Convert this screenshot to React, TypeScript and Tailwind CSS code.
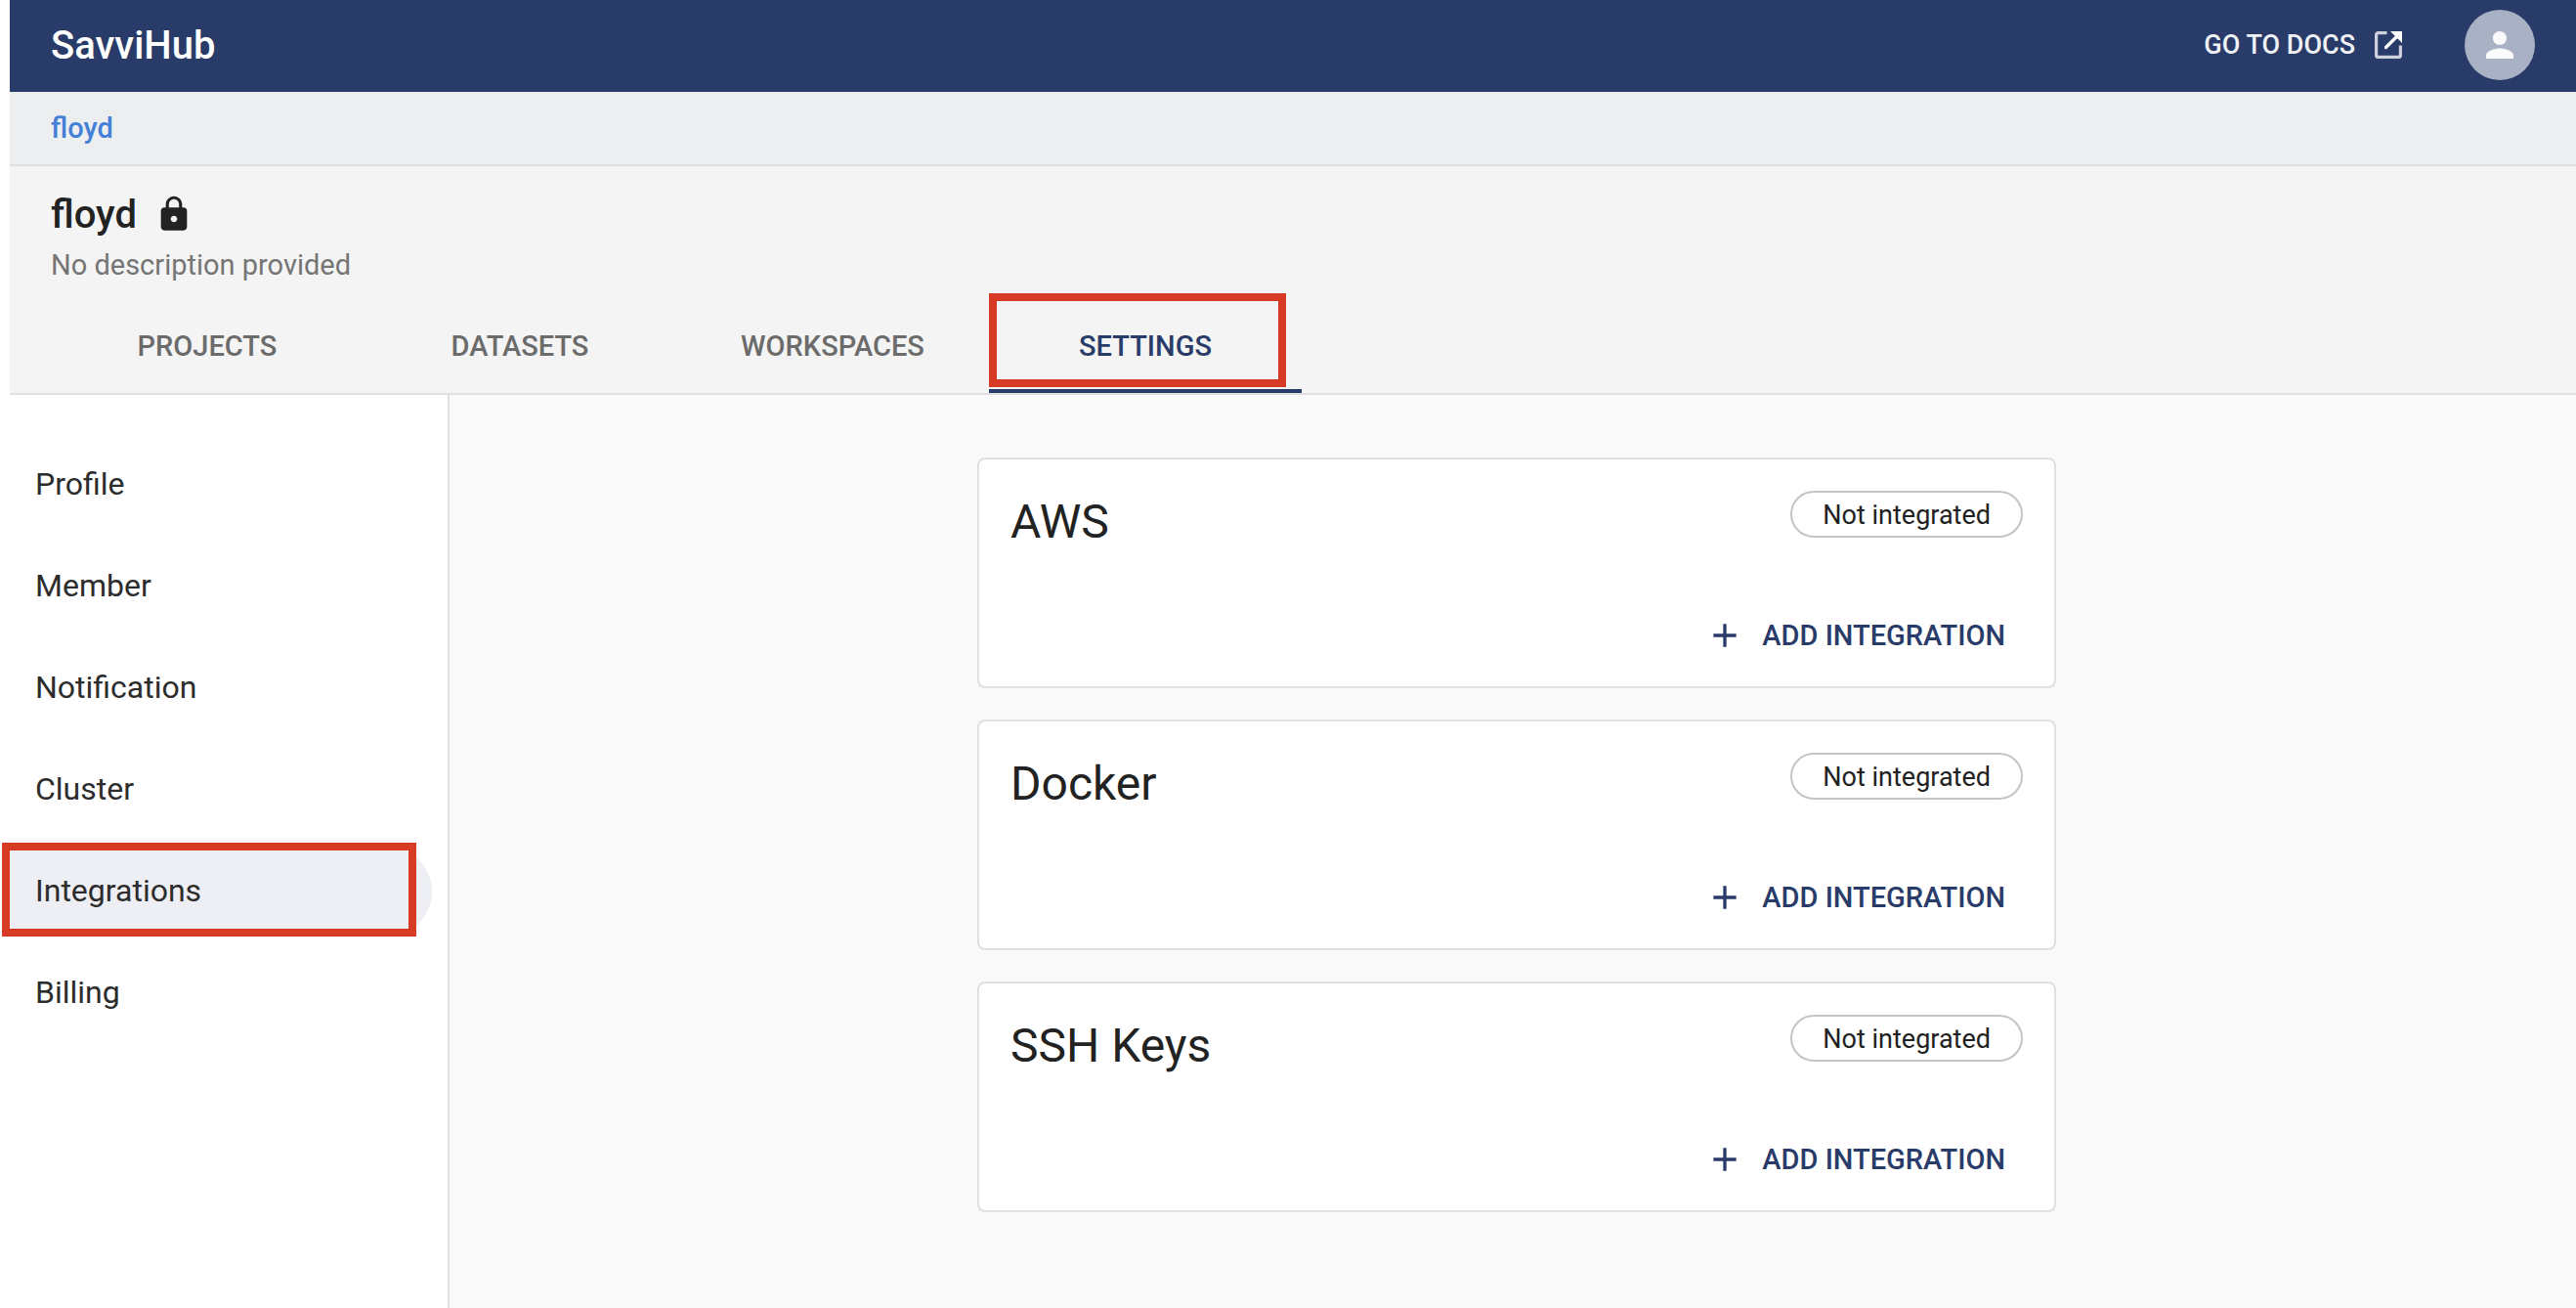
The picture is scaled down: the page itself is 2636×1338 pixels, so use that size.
import React from "react";
import { MdAdd, MdLock, MdPerson } from "react-icons/md";

const tabs = ["PROJECTS", "DATASETS", "WORKSPACES", "SETTINGS"];
const sections = ["Profile", "Member", "Notification", "Cluster", "Integrations", "Billing"];
const integrations = ["AWS", "Docker", "SSH Keys"];

function OpenInNewIcon() {
  return (
    <svg viewBox="0 0 28 28" className="size-7" fill="none" aria-hidden="true">
      <path
        d="M12.5 1.6H3.6a2 2 0 0 0-2 2v20.8a2 2 0 0 0 2 2h20.8a2 2 0 0 0 2-2V14.5"
        stroke="#ccd1dd"
        strokeWidth="3.2"
      />
      <path d="M11.5 16.5L22 6" stroke="#ffffff" strokeWidth="3.2" strokeLinecap="round" />
      <path d="M16 0H28V12Z" fill="#ffffff" />
    </svg>
  );
}

function TopBar() {
  return (
    <header className="flex h-[94px] items-center bg-[#293b68] px-[42px] pb-0.5 text-white">
      <span className="pt-0.5 text-[40px] leading-[64px] font-medium">SavviHub</span>
      <a href="#docs" className="ml-auto flex items-center gap-5 text-[27px] font-medium text-[#eff1f5]">
        GO TO DOCS
        <OpenInNewIcon />
      </a>
      <button
        type="button"
        aria-label="Account"
        className="ml-16 flex size-[72px] items-center justify-center rounded-full bg-[#a9b1c4] text-[#fafafa]"
      >
        <MdPerson className="size-[42px]" />
      </button>
    </header>
  );
}

function Breadcrumb() {
  return (
    <nav aria-label="Breadcrumb" className="flex h-[76px] items-center border-b-2 border-[#e0e0e0] bg-[#eceef0] pl-[42px]">
      <a href="#floyd" className="text-[29px] leading-[40px] font-medium text-[#4480d6]">
        floyd
      </a>
    </nav>
  );
}

function GroupHeader() {
  return (
    <div className="border-b-2 border-[#e0e0e0] bg-[#f4f4f4] pt-4 pl-[42px]">
      <div className="flex items-center gap-[18px] text-[#222222]">
        <h1 className="pt-0.5 text-[40px] leading-[64px] font-medium">floyd</h1>
        <MdLock className="size-[40px]" />
      </div>
      <p className="text-[29px] leading-[38px] text-[#757575]">No description provided</p>
      <div role="tablist" className="mt-4 flex">
        {tabs.map((tab) => {
          const active = tab === "SETTINGS";
          return (
            <button
              key={tab}
              type="button"
              role="tab"
              aria-selected={active}
              className={
                active
                  ? "relative h-24 w-80 pt-0.5 text-[29px] font-medium text-[#293b68]"
                  : "h-24 w-80 pt-0.5 text-[29px] font-medium text-[#6b6b6b]"
              }
            >
              {tab}
              {active && <span className="absolute bottom-0 left-0 h-1 w-full bg-[#293b68]" />}
              {active && <span className="absolute -top-1.5 left-0 h-24 w-[304px] border-8 border-[#d73a25]" />}
            </button>
          );
        })}
      </div>
    </div>
  );
}

function Sidebar() {
  return (
    <nav aria-label="Settings" className="w-[450px] shrink-0 border-r-2 border-[#e0e0e0] bg-white pt-[46px]">
      <ul className="flex flex-col gap-3 pr-4">
        {sections.map((name) => {
          const active = name === "Integrations";
          return (
            <li key={name}>
              <a
                href={"#" + name.toLowerCase()}
                className={
                  active
                    ? "relative flex h-[92px] items-center rounded-r-full bg-[#eeeff4] pb-0.5 pl-[26px] text-[32px] text-[#2c2c2c]"
                    : "flex h-[92px] items-center pb-0.5 pl-[26px] text-[32px] text-[#2c2c2c]"
                }
              >
                {name}
                {active && <span className="absolute -top-1 -left-2 h-24 w-[424px] border-8 border-[#d73a25]" />}
              </a>
            </li>
          );
        })}
      </ul>
    </nav>
  );
}

function IntegrationCard({ name }: { name: string }) {
  return (
    <section className="rounded-lg border-2 border-[#e0e0e0] bg-white px-8 pt-8 pb-4">
      <div className="flex items-start justify-between text-[#222222]">
        <h2 className="text-[48px] leading-[64px]">{name}</h2>
        <span className="flex h-12 items-center rounded-full border-2 border-[#c4c4c4] px-[31px] pt-0.5 text-[27px]">
          Not integrated
        </span>
      </div>
      <div className="mt-12 flex justify-end">
        <button type="button" className="flex h-[72px] items-center gap-[18px] px-[18px] text-[29px] font-medium text-[#293b68]">
          <MdAdd className="size-[40px]" />
          <span className="pt-0.5">ADD INTEGRATION</span>
        </button>
      </div>
    </section>
  );
}

export default function App() {
  return (
    <div className="flex min-h-screen flex-col bg-white pl-2.5 font-['Roboto',sans-serif]">
      <TopBar />
      <Breadcrumb />
      <GroupHeader />
      <div className="flex grow">
        <Sidebar />
        <main className="grow bg-[#fafafa] pt-16 pl-2">
          <div className="mx-auto flex w-full max-w-[1104px] flex-col gap-8">
            {integrations.map((name) => (
              <IntegrationCard key={name} name={name} />
            ))}
          </div>
        </main>
      </div>
    </div>
  );
}
